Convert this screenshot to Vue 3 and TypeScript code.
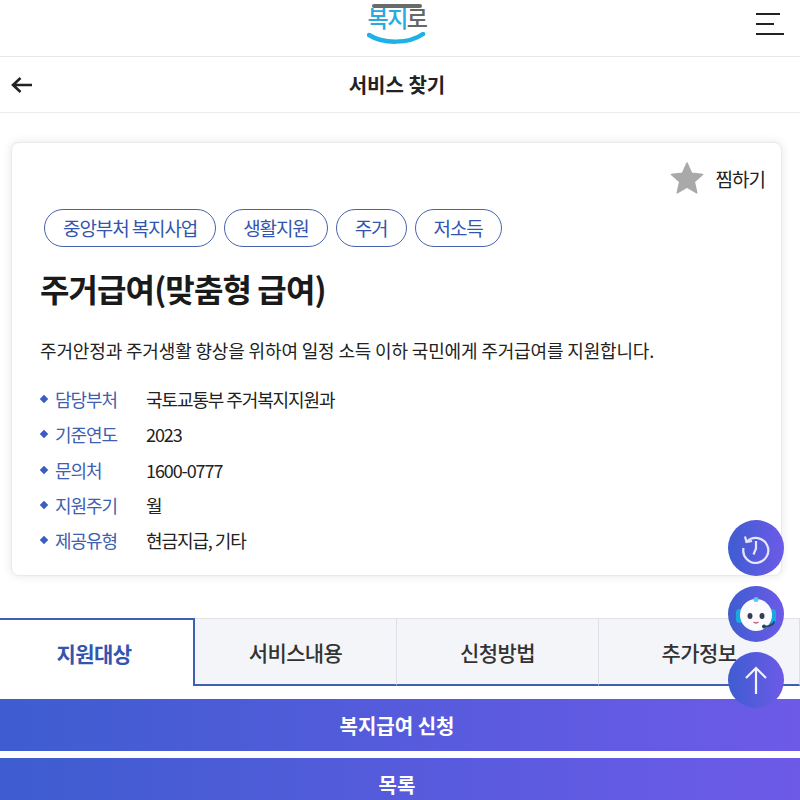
<template>
  <div class="page">
    <header class="top">
      <div class="logo">
        <span class="logo__bar"></span>
        <span class="logo__text">복지<b>로</b></span>
        <svg class="logo__smile" width="60" height="14" viewBox="0 0 60 14">
          <path d="M2 3 C 16 12, 42 12, 56 2" fill="none" stroke="#1fb1e6" stroke-width="4.5" stroke-linecap="round" />
        </svg>
      </div>
      <button class="menu" aria-label="메뉴">
        <span class="menu__a"></span>
        <span class="menu__b"></span>
        <span class="menu__c"></span>
      </button>
    </header>

    <div class="sub">
      <svg class="sub__back" width="22" height="18" viewBox="0 0 22 18">
        <path d="M21 9H2M9.500 2 2 9l7.500 7" fill="none" stroke="#222" stroke-width="2.600" />
      </svg>
      <h1 class="sub__title">서비스 찾기</h1>
    </div>

    <section class="card">
      <div class="fav">
        <svg width="34" height="34" viewBox="0 0 34 34">
          <path
            d="M17 2l4.600 10.300 11 1.100-8.300 7.400 2.500 11L17 26.100 7.200 31.800l2.500-11L1.400 13.400l11-1.100z"
            fill="#a9a9a9"
            stroke="#a9a9a9"
            stroke-width="1.500"
            stroke-linejoin="round"
          />
        </svg>
        <span>찜하기</span>
      </div>
      <div class="tags">
        <span v-for="t in tags" :key="t" class="tag">{{ t }}</span>
      </div>
      <h2 class="card__title">주거급여(맞춤형 급여)</h2>
      <p class="card__desc">주거안정과 주거생활 향상을 위하여 일정 소득 이하 국민에게 주거급여를 지원합니다.</p>
      <ul class="info">
        <li v-for="row in rows" :key="row.label" class="info__row">
          <i class="info__dot"></i>
          <span class="info__label">{{ row.label }}</span>
          <span class="info__value">{{ row.value }}</span>
        </li>
      </ul>
    </section>

    <nav class="tabs">
      <div v-for="(t, i) in tabs" :key="t" class="tab" :class="{ 'tab--on': i === 0 }">{{ t }}</div>
    </nav>

    <div class="actions">
      <a class="btn">복지급여 신청</a>
      <a class="btn">목록</a>
    </div>

    <div class="float">
      <button class="fab" aria-label="최근 본">
        <svg width="32" height="32" viewBox="0 0 32 32" fill="none" stroke="#e6e6fb" stroke-width="2.200">
          <path d="M7 9.500A12.500 12.500 0 1 1 3.500 16" />
          <path d="M5 4.500l1.500 5.500 5.500-1" />
          <path d="M16 9v7.500l-2.500 6" />
        </svg>
      </button>
      <button class="fab" aria-label="챗봇">
        <svg width="46" height="46" viewBox="0 0 46 46">
          <rect x="3" y="18" width="7" height="14" rx="3.500" fill="#19a9e0" />
          <rect x="36" y="18" width="7" height="14" rx="3.500" fill="#19a9e0" />
          <ellipse cx="23" cy="24" rx="16" ry="16" fill="#fbfbfd" />
          <circle cx="23" cy="8.500" r="2.500" fill="#5fc6ee" />
          <ellipse cx="17" cy="25" rx="2.500" ry="3" fill="#3a3a55" />
          <ellipse cx="29" cy="25" rx="2.500" ry="3" fill="#3a3a55" />
          <path d="M20.500 31q2.500 2 5 0" fill="none" stroke="#c0506a" stroke-width="1.300" />
          <path d="M41 30q0 5-9 5.500" fill="none" stroke="#18485e" stroke-width="1.600" />
          <circle cx="31" cy="35.500" r="2" fill="#18485e" />
        </svg>
      </button>
      <button class="fab" aria-label="위로">
        <svg width="24" height="30" viewBox="0 0 24 30" fill="none" stroke="#f2f2ff" stroke-width="2.200">
          <path d="M12 29V3M2 13 12 3l10 10" />
        </svg>
      </button>
    </div>
  </div>
</template>

<script setup lang="ts">
const tags: string[] = ['중앙부처 복지사업', '생활지원', '주거', '저소득']

const rows: { label: string; value: string }[] = [
  { label: '담당부처', value: '국토교통부 주거복지지원과' },
  { label: '기준연도', value: '2023' },
  { label: '문의처', value: '1600-0777' },
  { label: '지원주기', value: '월' },
  { label: '제공유형', value: '현금지급, 기타' },
]

const tabs: string[] = ['지원대상', '서비스내용', '신청방법', '추가정보']
</script>

<style>
html,
body {
  margin: 0;
  height: 800px;
  overflow: hidden;
  background: #fff;
}
</style>

<style scoped>
.page {
  position: relative;
  width: 800px;
  height: 800px;
  overflow: hidden;
  font-family: "Noto Sans CJK KR", "Noto Sans", sans-serif;
  color: #111;
  letter-spacing: -0.6px;
}

.top {
  position: relative;
  height: 56px;
  border-bottom: 1px solid #e8e8e8;
  display: flex;
  justify-content: center;
  padding-right: 6px;
}

.logo {
  width: 64px;
  height: 48px;
  display: flex;
  flex-direction: column;
  align-items: center;
  position: relative;
}

.logo__bar {
  position: absolute;
  top: 4px;
  left: 7px;
  width: 50px;
  height: 4px;
  border-radius: 2px;
  background: #6a6a6a;
}

.logo__text {
  margin-top: 2px;
  font-size: 23px;
  line-height: 31px;
  font-weight: 500;
  color: #2aa9dd;
  letter-spacing: -1.5px;
}

.logo__text b {
  font-weight: 500;
  color: #666;
}

.logo__smile {
  margin-top: -1px;
}

.menu {
  position: absolute;
  right: 16px;
  top: 13px;
  width: 28px;
  height: 22px;
  padding: 0;
  border: 0;
  background: none;
  display: flex;
  flex-direction: column;
  justify-content: space-between;
}

.menu span {
  display: block;
  height: 2px;
  background: #222;
}

.menu__a {
  width: 24px;
}

.menu__b {
  width: 18px;
}

.menu__c {
  width: 28px;
}

.sub {
  position: relative;
  height: 55px;
  border-bottom: 1px solid #ececec;
  display: flex;
  align-items: center;
  justify-content: center;
  padding-right: 6px;
}

.sub__back {
  position: absolute;
  left: 11px;
  top: 19px;
}

.sub__title {
  margin: 0;
  font-size: 20px;
  font-weight: 700;
  color: #222;
  letter-spacing: 0;
}

.card {
  margin: 29px 18px 0 11px;
  height: 434px;
  box-sizing: border-box;
  border-radius: 8px;
  background: #fff;
  border: 1px solid #eaeaea;
  box-shadow: 0 0 10px rgba(0, 0, 0, 0.1);
  padding: 18px 16px 0 28px;
  display: flex;
  flex-direction: column;
}

.fav {
  align-self: flex-end;
  display: flex;
  align-items: center;
  gap: 12px;
  height: 34px;
  font-size: 19px;
  color: #222;
  letter-spacing: -1px;
}

.tags {
  margin: 14px 0 0 4px;
  display: flex;
  gap: 8px;
}

.tag {
  height: 38px;
  box-sizing: border-box;
  padding: 0 18px;
  border: 1px solid #4862ad;
  border-radius: 19px;
  font-size: 19px;
  line-height: 36px;
  color: #3355b0;
  letter-spacing: -1.1px;
}

.card__title {
  margin: 18px 0 0;
  font-size: 32px;
  line-height: 46px;
  font-weight: 700;
  color: #1a1a1a;
  letter-spacing: -0.9px;
}

.card__desc {
  margin: 25px 0 0;
  font-size: 18px;
  line-height: 28px;
  color: #222;
  letter-spacing: -0.15px;
}

.info {
  list-style: none;
  margin: 21px 0 0;
  padding: 0;
  display: flex;
  flex-direction: column;
  gap: 7.250px;
}

.info__row {
  display: flex;
  align-items: center;
  height: 28px;
  font-size: 18px;
  letter-spacing: -1.1px;
}

.info__dot {
  width: 6px;
  height: 6px;
  margin: 0 8px 0 1px;
  background: #3a5cc4;
  transform: rotate(45deg);
}

.info__label {
  width: 91px;
  color: #3f60b0;
}

.info__value {
  color: #222;
}

.tabs {
  margin-top: 42px;
  height: 68px;
  display: grid;
  grid-template-columns: 195px 202px 202px 201px;
}

.tab {
  box-sizing: border-box;
  display: flex;
  align-items: center;
  justify-content: center;
  background: #f4f5f9;
  border-top: 1px solid #e3e3e3;
  border-right: 1px solid #dcdfe8;
  border-bottom: 2px solid #3f5fb5;
  font-size: 21px;
  font-weight: 500;
  color: #333;
}

.tab--on {
  background: #fff;
  border-top: 2px solid #3f5fb5;
  border-right: 2px solid #3f5fb5;
  border-bottom: 0;
  color: #3355b0;
  font-weight: 700;
  padding-right: 5px;
}

.actions {
  margin-top: 13px;
  display: flex;
  flex-direction: column;
  gap: 7px;
}

.btn {
  height: 52px;
  display: flex;
  align-items: center;
  justify-content: center;
  padding-right: 6px;
  background: linear-gradient(90deg, #3e5dd0, #6d5ae8);
  color: #fff;
  font-size: 20px;
  font-weight: 700;
  letter-spacing: 0;
}

.float {
  position: absolute;
  right: 16px;
  top: 520px;
  display: flex;
  flex-direction: column;
  gap: 10px;
}

.fab {
  width: 56px;
  height: 56px;
  padding: 0;
  border: 0;
  border-radius: 50%;
  background: linear-gradient(90deg, #3e5dd0, #6d5ae8);
  display: flex;
  align-items: center;
  justify-content: center;
}
</style>
